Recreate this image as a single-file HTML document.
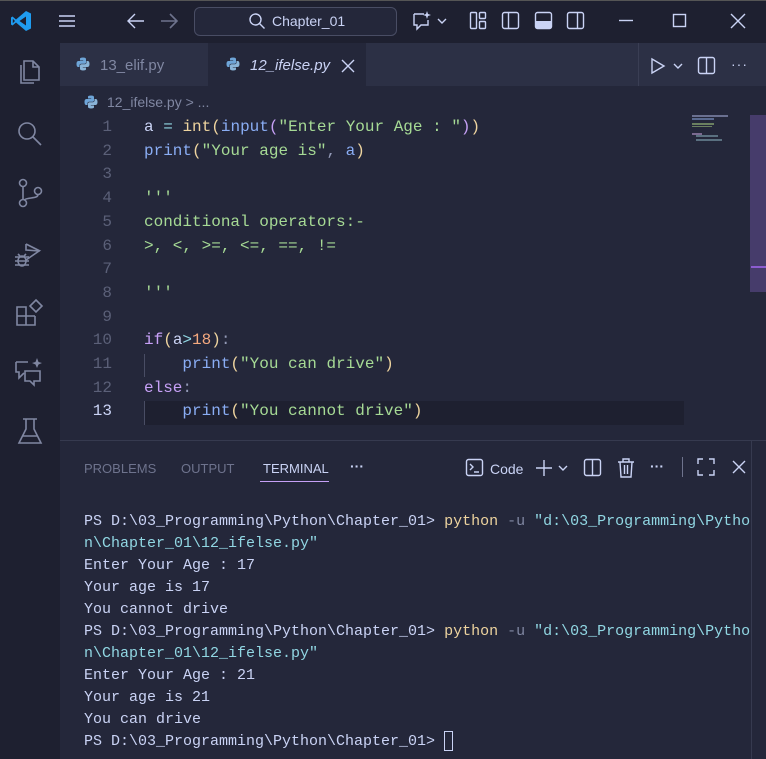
<!DOCTYPE html>
<html><head><meta charset="utf-8"><style>
*{margin:0;padding:0;box-sizing:border-box}
body{width:766px;height:759px;overflow:hidden;background:#24273a;font-family:"Liberation Sans",sans-serif;position:relative;color:#cad3f5}
.a{position:absolute}
#title{left:0;top:0;width:766px;height:43px;background:#1e2030;border-top:1px solid #555}
#act{left:0;top:43px;width:60px;height:716px;background:#1e2030}
#tabs{left:60px;top:43px;width:706px;height:43px;background:#2c3045}
.mono{font-family:"Liberation Mono",monospace}
.code{font-size:16px;line-height:23.7px;white-space:pre}
.ln{left:80px;width:32px;text-align:right;color:#5b6078}
.term{font-size:15px;line-height:22px;white-space:pre;color:#cad3f5}
svg{position:absolute}
.ic{fill:none;stroke:#8087a2;stroke-width:1.6}
.tb{fill:none;stroke:#cad3f5;stroke-width:1.4}
</style></head><body>
<div id="title" class="a"></div>
<svg style="left:10px;top:10px" width="22" height="22" viewBox="0 0 22 22"><path d="M16 1 L21 3.5 V18.5 L16 21 L6 12.5 L2.5 15.5 L1 14.5 V7.5 L2.5 6.5 L6 9.5 Z M16 6.5 L9.5 11 L16 15.5 Z M2.8 8.8 V13.2 L5 11 Z" fill="#1f9cf0" fill-rule="evenodd"/></svg>
<svg style="left:58px;top:14px" width="18" height="14"><path d="M1 2H17M1 7H17M1 12H17" stroke="#cad3f5" stroke-width="1.4"/></svg>
<svg style="left:126px;top:12px" width="20" height="18"><path d="M18 9H3M9 2L2 9L9 16" class="tb" stroke-width="1.6"/></svg>
<svg style="left:159px;top:12px" width="20" height="18"><path d="M2 9H17M11 2L18 9L11 16" fill="none" stroke="#6e738d" stroke-width="1.6"/></svg>
<div class="a" style="left:194px;top:7px;width:203px;height:29px;border:1px solid #494d64;border-radius:6px;background:#24273a"></div>
<svg style="left:248px;top:12px" width="18" height="18"><circle cx="7.5" cy="7.5" r="5.5" class="tb"/><path d="M11.5 11.5L16.5 16.5" class="tb"/></svg>
<div class="a" style="left:272px;top:13px;font-size:14px;color:#cad3f5">Chapter_01</div>
<svg style="left:411px;top:10px" width="40" height="22"><path d="M3 4H13M3 4V15H6V19L10 15H17V10" class="tb"/><path d="M16 1L17 4L20 5L17 6L16 9L15 6L12 5L15 4Z" fill="#cad3f5"/><path d="M27 9L31 13L35 9" class="tb"/></svg>
<svg style="left:469px;top:11px" width="20" height="20"><rect x="1.5" y="1.5" width="6" height="16" rx="1" class="tb"/><rect x="10.5" y="1.5" width="6" height="6" rx="1" class="tb"/><rect x="10.5" y="10.5" width="6" height="7" rx="1" class="tb"/></svg>
<svg style="left:501px;top:11px" width="20" height="20"><rect x="1.5" y="1.5" width="16" height="16" rx="2" class="tb"/><path d="M7.5 1.5V17.5" class="tb"/></svg>
<svg style="left:534px;top:11px" width="20" height="20"><rect x="1.5" y="1.5" width="16" height="16" rx="2" class="tb"/><rect x="1.5" y="10" width="16" height="7.5" fill="#cad3f5"/></svg>
<svg style="left:566px;top:11px" width="20" height="20"><rect x="1.5" y="1.5" width="16" height="16" rx="2" class="tb"/><path d="M11.5 1.5V17.5" class="tb"/></svg>
<svg style="left:617px;top:15px" width="20" height="10"><path d="M2 5.5H16" class="tb"/></svg>
<svg style="left:672px;top:13px" width="16" height="16"><rect x="1.5" y="1.5" width="12" height="12" class="tb"/></svg>
<svg style="left:730px;top:13px" width="16" height="16"><path d="M1 1L15 15M15 1L1 15" class="tb" stroke-width="1.5"/></svg>

<div id="act" class="a"></div>
<svg style="left:16px;top:58px" width="28" height="30"><path d="M8 3H17L23 9V22H8Z M17 3V9H23" class="ic"/><path d="M5 7V25H18" class="ic"/></svg>
<svg style="left:16px;top:120px" width="28" height="28"><circle cx="11" cy="11" r="8" class="ic"/><path d="M17 17L25 25" class="ic"/></svg>
<svg style="left:16px;top:178px" width="28" height="32"><circle cx="7" cy="5" r="3.5" class="ic"/><circle cx="7" cy="25" r="3.5" class="ic"/><circle cx="22" cy="13" r="3.5" class="ic"/><path d="M7 8.5V21.5M22 16.5C22 21 12 19 8 22" class="ic"/></svg>
<svg style="left:12px;top:240px" width="32" height="32"><path d="M14 4V10L27 11L14 20" class="ic"/><path d="M14 4L28 11" class="ic"/><ellipse cx="10" cy="21" rx="4" ry="5" class="ic"/><path d="M3 17H17M3 21H17M3 25H17M6 14L8 16M14 14L12 16" class="ic"/></svg>
<svg style="left:14px;top:298px" width="30" height="30"><path d="M3 9H12V27H3Z M3 18H21 M12 18V27H21V18 M12 9V18" class="ic"/><path d="M22 2L28 8L22 14L16 8Z" class="ic"/></svg>
<svg style="left:12px;top:356px" width="32" height="32"><path d="M4 6H16M4 6V16H7V22L12 17" class="ic"/><path d="M13 15H28V25H22V29L18 25H13Z" class="ic"/><path d="M25 2L26.5 6L30 7L26.5 8.5L25 12L23.5 8.5L20 7L23.5 6Z" fill="#8087a2"/></svg>
<svg style="left:16px;top:416px" width="28" height="32"><path d="M7 3H21M10 3V13L3 27H25L18 13V3M6 20H22" class="ic"/></svg>

<div id="tabs" class="a"></div>
<div class="a" style="left:208px;top:43px;width:158px;height:43px;background:#24273a"></div>
<div class="a" style="left:638px;top:43px;width:1px;height:43px;background:#3a3e54"></div>
<svg style="left:76px;top:57px" width="14" height="14" viewBox="0 0 14 14"><path d="M7 0.5C3.5 0.5 4 2 4 2V3.5H7.2V4H2.5C2.5 4 0.5 3.8 0.5 7C0.5 10.2 2.2 10 2.2 10H3.5V8.5C3.5 8.5 3.4 6.8 5.2 6.8H8.5C8.5 6.8 10 6.8 10 5.3V2.2C10 2.2 10.3 0.5 7 0.5Z" fill="#6ea5d8"/><path d="M7 13.5C10.5 13.5 10 12 10 12V10.5H6.8V10H11.5C11.5 10 13.5 10.2 13.5 7C13.5 3.8 11.8 4 11.8 4H10.5V5.5C10.5 5.5 10.6 7.2 8.8 7.2H5.5C5.5 7.2 4 7.2 4 8.7V11.8C4 11.8 3.7 13.5 7 13.5Z" fill="#8ab4d8"/></svg>
<div class="a" style="left:100px;top:57px;font-size:15px;color:#8087a2">13_elif.py</div>
<svg style="left:226px;top:57px" width="14" height="14" viewBox="0 0 14 14"><path d="M7 0.5C3.5 0.5 4 2 4 2V3.5H7.2V4H2.5C2.5 4 0.5 3.8 0.5 7C0.5 10.2 2.2 10 2.2 10H3.5V8.5C3.5 8.5 3.4 6.8 5.2 6.8H8.5C8.5 6.8 10 6.8 10 5.3V2.2C10 2.2 10.3 0.5 7 0.5Z" fill="#6ea5d8"/><path d="M7 13.5C10.5 13.5 10 12 10 12V10.5H6.8V10H11.5C11.5 10 13.5 10.2 13.5 7C13.5 3.8 11.8 4 11.8 4H10.5V5.5C10.5 5.5 10.6 7.2 8.8 7.2H5.5C5.5 7.2 4 7.2 4 8.7V11.8C4 11.8 3.7 13.5 7 13.5Z" fill="#8ab4d8"/></svg>
<div class="a" style="left:250px;top:57px;font-size:15px;color:#cad3f5;font-style:italic">12_ifelse.py</div>
<svg style="left:341px;top:59px" width="14" height="14"><path d="M1 1L13 13M13 1L1 13" class="tb" stroke-width="1.6"/></svg>
<svg style="left:650px;top:57px" width="36" height="18"><path d="M2 2V16L14 9Z" class="tb"/><path d="M24 7L28 11L32 7" class="tb"/></svg>
<svg style="left:697px;top:56px" width="20" height="20"><rect x="1.5" y="1.5" width="16" height="16" rx="2" class="tb"/><path d="M9.5 1.5V17.5" class="tb"/></svg>
<div class="a" style="left:731px;top:56px;font-size:14px;color:#cad3f5;letter-spacing:1px">···</div>

<svg style="left:84px;top:95px" width="14" height="14" viewBox="0 0 14 14"><path d="M7 0.5C3.5 0.5 4 2 4 2V3.5H7.2V4H2.5C2.5 4 0.5 3.8 0.5 7C0.5 10.2 2.2 10 2.2 10H3.5V8.5C3.5 8.5 3.4 6.8 5.2 6.8H8.5C8.5 6.8 10 6.8 10 5.3V2.2C10 2.2 10.3 0.5 7 0.5Z" fill="#6ea5d8"/><path d="M7 13.5C10.5 13.5 10 12 10 12V10.5H6.8V10H11.5C11.5 10 13.5 10.2 13.5 7C13.5 3.8 11.8 4 11.8 4H10.5V5.5C10.5 5.5 10.6 7.2 8.8 7.2H5.5C5.5 7.2 4 7.2 4 8.7V11.8C4 11.8 3.7 13.5 7 13.5Z" fill="#8ab4d8"/></svg>
<div class="a" style="left:107px;top:94px;font-size:14px;color:#8087a2">12_ifelse.py &gt; ...</div>

<div class="a" style="left:144px;top:401px;width:540px;height:24px;background:#1e2030"></div>
<div class="a" style="left:144px;top:354px;width:1px;height:23px;background:#494d64"></div>
<div class="a" style="left:144px;top:401px;width:1px;height:24px;background:#494d64"></div>

<div class="a mono code ln" style="top:116px">1
2
3
4
5
6
7
8
9
10
11
12
<span style="color:#cad3f5">13</span></div>
<div class="a mono code" style="left:144px;top:116px;color:#cad3f5"><span style="color:#cad3f5">a</span> <span style="color:#91d7e3">=</span> <span style="color:#eed49f">int</span><span style="color:#eed49f">(</span><span style="color:#8aadf4">input</span><span style="color:#c6a0f6">(</span><span style="color:#a6da95">"Enter Your Age : "</span><span style="color:#c6a0f6">)</span><span style="color:#eed49f">)</span>
<span style="color:#8aadf4">print</span><span style="color:#eed49f">(</span><span style="color:#a6da95">"Your age is"</span><span style="color:#939ab7">,</span> <span style="color:#8aadf4">a</span><span style="color:#eed49f">)</span>

<span style="color:#a6da95">'''</span>
<span style="color:#a6da95">conditional operators:-</span>
<span style="color:#a6da95">&gt;, &lt;, &gt;=, &lt;=, ==, !=</span>

<span style="color:#a6da95">'''</span>

<span style="color:#c6a0f6">if</span><span style="color:#eed49f">(</span><span style="color:#cad3f5">a</span><span style="color:#91d7e3">&gt;</span><span style="color:#f5a97f">18</span><span style="color:#eed49f">)</span><span style="color:#939ab7">:</span>
    <span style="color:#8aadf4">print</span><span style="color:#eed49f">(</span><span style="color:#a6da95">"You can drive"</span><span style="color:#eed49f">)</span>
<span style="color:#c6a0f6">else</span><span style="color:#939ab7">:</span>
    <span style="color:#8aadf4">print</span><span style="color:#eed49f">(</span><span style="color:#a6da95">"You cannot drive"</span><span style="color:#eed49f">)</span></div>

<div class="a" style="left:692px;top:115px;width:36px;height:2px;background:#6a7090"></div>
<div class="a" style="left:692px;top:118px;width:22px;height:2px;background:#5a6a90"></div>
<div class="a" style="left:692px;top:123px;width:22px;height:2px;background:#6a8060"></div>
<div class="a" style="left:692px;top:126px;width:20px;height:1px;background:#6a8060"></div>
<div class="a" style="left:692px;top:133px;width:10px;height:2px;background:#7a6a90"></div>
<div class="a" style="left:696px;top:135px;width:22px;height:2px;background:#5a7080"></div>
<div class="a" style="left:696px;top:139px;width:26px;height:2px;background:#5a7080"></div>
<div class="a" style="left:750px;top:115px;width:16px;height:177px;background:#463c6b"></div>
<div class="a" style="left:751px;top:266px;width:15px;height:2px;background:#8c5cd0"></div>

<div class="a" style="left:60px;top:440px;width:706px;height:1px;background:#363a4f"></div>
<div class="a" style="left:84px;top:461px;font-size:13px;color:#6e738d">PROBLEMS</div>
<div class="a" style="left:181px;top:461px;font-size:13px;color:#6e738d">OUTPUT</div>
<div class="a" style="left:263px;top:461px;font-size:13px;color:#cad3f5">TERMINAL</div>
<div class="a" style="left:260px;top:481px;width:69px;height:1px;background:#c6a0f6"></div>
<div class="a" style="left:350px;top:458px;font-size:14px;color:#cad3f5;font-weight:bold">···</div>
<svg style="left:465px;top:458px" width="20" height="20"><rect x="1.5" y="1.5" width="16" height="16" rx="2" class="tb"/><path d="M5 6L8 9L5 12M9 14H14" class="tb"/></svg>
<div class="a" style="left:490px;top:461px;font-size:14px;color:#cad3f5">Code</div>
<svg style="left:534px;top:458px" width="40" height="20"><path d="M10 2V18M2 10H18" class="tb" stroke-width="1.6"/><path d="M25 8L29 12L33 8" class="tb"/></svg>
<svg style="left:583px;top:458px" width="20" height="20"><rect x="1.5" y="1.5" width="16" height="16" rx="2" class="tb"/><path d="M9.5 1.5V17.5" class="tb"/></svg>
<svg style="left:616px;top:457px" width="20" height="22"><path d="M2 5H18M7 5V2H13V5M4 5L5 20H15L16 5M8.5 8V17M11.5 8V17" class="tb"/></svg>
<div class="a" style="left:650px;top:458px;font-size:14px;color:#cad3f5;font-weight:bold">···</div>
<div class="a" style="left:682px;top:457px;width:1px;height:20px;background:#6e738d"></div>
<svg style="left:697px;top:458px" width="18" height="18"><path d="M1 6V1H6M12 1H17V6M17 12V17H12M6 17H1V12" class="tb"/></svg>
<svg style="left:732px;top:460px" width="14" height="14"><path d="M1 1L13 13M13 1L1 13" class="tb" stroke-width="1.5"/></svg>
<div class="a" style="left:751px;top:441px;width:1px;height:318px;background:#363a4f"></div>

<div class="a mono term" style="left:84px;top:511px">PS D:\03_Programming\Python\Chapter_01&gt; <span style="color:#eed49f">python</span> <span style="color:#8087a2">-u</span> <span style="color:#91d7e3">"d:\03_Programming\Pytho</span>
<span style="color:#91d7e3">n\Chapter_01\12_ifelse.py"</span>
Enter Your Age : 17
Your age is 17
You cannot drive
PS D:\03_Programming\Python\Chapter_01&gt; <span style="color:#eed49f">python</span> <span style="color:#8087a2">-u</span> <span style="color:#91d7e3">"d:\03_Programming\Pytho</span>
<span style="color:#91d7e3">n\Chapter_01\12_ifelse.py"</span>
Enter Your Age : 21
Your age is 21
You can drive
PS D:\03_Programming\Python\Chapter_01&gt; </div>
<div class="a" style="left:444px;top:731px;width:9px;height:20px;border:1px solid #cad3f5"></div>
</body></html>
